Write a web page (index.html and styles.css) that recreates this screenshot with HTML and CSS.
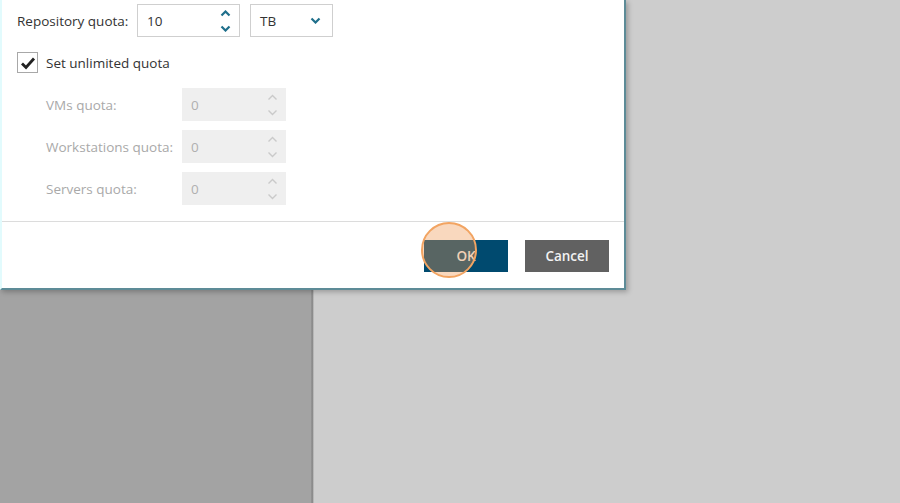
FILE: index.html
```html
<!DOCTYPE html>
<html>
<head>
  <title>Edit quota</title>
  <link rel="stylesheet" href="styles.css">
</head>
<body>
  <div class="backdrop">
    <div class="pane-left"></div>
    <div class="pane-divider"></div>
    <div class="pane-right"></div>
  </div>

  <div class="dialog">
    <div class="dialog-body">
      <div class="row">
        <label class="label">Repository quota:</label>
        <div class="spin">
          <span class="spin-value">10</span>
          <span class="spin-arrows">
            <svg width="11" height="7" viewBox="0 0 11 7"><path d="M1.5 5.5 L5.5 1.5 L9.5 5.5" /></svg>
            <svg width="11" height="7" viewBox="0 0 11 7"><path d="M1.5 1.5 L5.5 5.5 L9.5 1.5" /></svg>
          </span>
        </div>
        <div class="select">
          <span>TB</span>
          <svg width="11" height="7" viewBox="0 0 11 7"><path d="M1.5 1.5 L5.5 5.5 L9.5 1.5" /></svg>
        </div>
      </div>

      <div class="check-row">
        <span class="checkbox">
          <svg width="16" height="14" viewBox="0 0 16 14"><path d="M2 7.5 L6 11.5 L14 2.5" /></svg>
        </span>
        <span>Set unlimited quota</span>
      </div>

      <div class="sub-quotas">
        <div class="sub-row">
          <label class="sub-label">VMs quota:</label>
          <div class="spin disabled">
            <span class="spin-value">0</span>
            <span class="spin-arrows">
              <svg width="11" height="7" viewBox="0 0 11 7"><path d="M1.5 5.5 L5.5 1.5 L9.5 5.5" /></svg>
              <svg width="11" height="7" viewBox="0 0 11 7"><path d="M1.5 1.5 L5.5 5.5 L9.5 1.5" /></svg>
            </span>
          </div>
        </div>
        <div class="sub-row">
          <label class="sub-label">Workstations quota:</label>
          <div class="spin disabled">
            <span class="spin-value">0</span>
            <span class="spin-arrows">
              <svg width="11" height="7" viewBox="0 0 11 7"><path d="M1.5 5.5 L5.5 1.5 L9.5 5.5" /></svg>
              <svg width="11" height="7" viewBox="0 0 11 7"><path d="M1.5 1.5 L5.5 5.5 L9.5 1.5" /></svg>
            </span>
          </div>
        </div>
        <div class="sub-row">
          <label class="sub-label">Servers quota:</label>
          <div class="spin disabled">
            <span class="spin-value">0</span>
            <span class="spin-arrows">
              <svg width="11" height="7" viewBox="0 0 11 7"><path d="M1.5 5.5 L5.5 1.5 L9.5 5.5" /></svg>
              <svg width="11" height="7" viewBox="0 0 11 7"><path d="M1.5 1.5 L5.5 5.5 L9.5 1.5" /></svg>
            </span>
          </div>
        </div>
      </div>
    </div>

    <div class="dialog-footer">
      <button class="btn btn-ok">OK</button>
      <button class="btn btn-cancel">Cancel</button>
      <span class="click-mark"></span>
    </div>
  </div>
</body>
</html>
```

FILE: styles.css
```css
html, body {
  height: 100%;
  margin: 0;
  padding: 0;
  font-family: "Open Sans", "Liberation Sans", sans-serif;
  font-size: 13.5px;
  color: #333;
  overflow: hidden;
}

.backdrop {
  display: grid;
  grid-template-columns: 311px 3px 1fr;
  height: 100%;
}

.pane-left {
  background: #a3a3a3;
}

.pane-divider {
  background: linear-gradient(to right, #949494, #8a8a8a 60%, #d6d6d6);
}

.pane-right {
  background: #cdcdcd;
}

/* modal sits on top of the panes */
.dialog {
  position: absolute;
  top: 0;
  left: 0;
  width: 626px;
  height: 290px;
  box-sizing: border-box;
  background: #fff;
  border-right: 2px solid #5d8b97;
  border-bottom: 2px solid #5d8b97;
  border-left: 2px solid #e2fbfd;
  box-shadow: 2px 2px 5px rgba(0, 0, 0, 0.25);
  display: flex;
  flex-direction: column;
}

.dialog-body {
  padding: 4px 0 0 15px;
  height: 222px;
  box-sizing: border-box;
  border-bottom: 1px solid #dcdcdc;
}

.row {
  display: flex;
  align-items: center;
  height: 33px;
}

.label {
  width: 120px;
}

.spin {
  width: 103px;
  height: 33px;
  box-sizing: border-box;
  border: 1px solid #cfcfcf;
  display: flex;
  align-items: center;
  justify-content: space-between;
  padding: 0 8px 0 9px;
}

.spin-arrows {
  display: flex;
  flex-direction: column;
  gap: 8px;
}

.spin-arrows svg path,
.select svg path {
  fill: none;
  stroke: #1f6f8b;
  stroke-width: 2.2;
}

.select {
  width: 83px;
  height: 33px;
  margin-left: 10px;
  box-sizing: border-box;
  border: 1px solid #cfcfcf;
  display: flex;
  align-items: center;
  justify-content: space-between;
  padding: 0 11px 0 9px;
}

.check-row {
  display: flex;
  align-items: center;
  gap: 8px;
  margin-top: 15px;
  height: 21px;
}

.checkbox {
  width: 21px;
  height: 21px;
  box-sizing: border-box;
  border: 1px solid #a8a8a8;
  display: flex;
  align-items: center;
  justify-content: center;
}

.checkbox svg path {
  fill: none;
  stroke: #222;
  stroke-width: 2.8;
}

.sub-quotas {
  display: flex;
  flex-direction: column;
  gap: 9px;
  margin-top: 15px;
  padding-left: 29px;
}

.sub-row {
  display: flex;
  align-items: center;
}

.sub-label {
  width: 136px;
  color: #a9a9a9;
}

.spin.disabled {
  width: 104px;
  border: none;
  background: #efefef;
  color: #b0b0b0;
}

.spin.disabled .spin-arrows svg path {
  stroke: #cacaca;
  stroke-width: 1.4;
}

.dialog-footer {
  position: relative;
  flex: 1;
  display: flex;
  justify-content: flex-end;
  align-items: flex-start;
  gap: 17px;
  padding: 18px 15px 0 0;
}

.btn {
  width: 84px;
  height: 32px;
  border: none;
  font-family: "Open Sans", "Liberation Sans", sans-serif;
  font-size: 13.5px;
  font-weight: 600;
  color: #f2f2f2;
  cursor: pointer;
}

.btn-ok {
  background: #004a6f;
}

.btn-cancel {
  background: #616161;
}

/* click highlight over the OK button */
.click-mark {
  position: absolute;
  left: 419px;
  top: 0;
  width: 52px;
  height: 52px;
  border-radius: 50%;
  border: 2px solid #f2a462;
  background: rgba(240, 150, 80, 0.37);
}
```
